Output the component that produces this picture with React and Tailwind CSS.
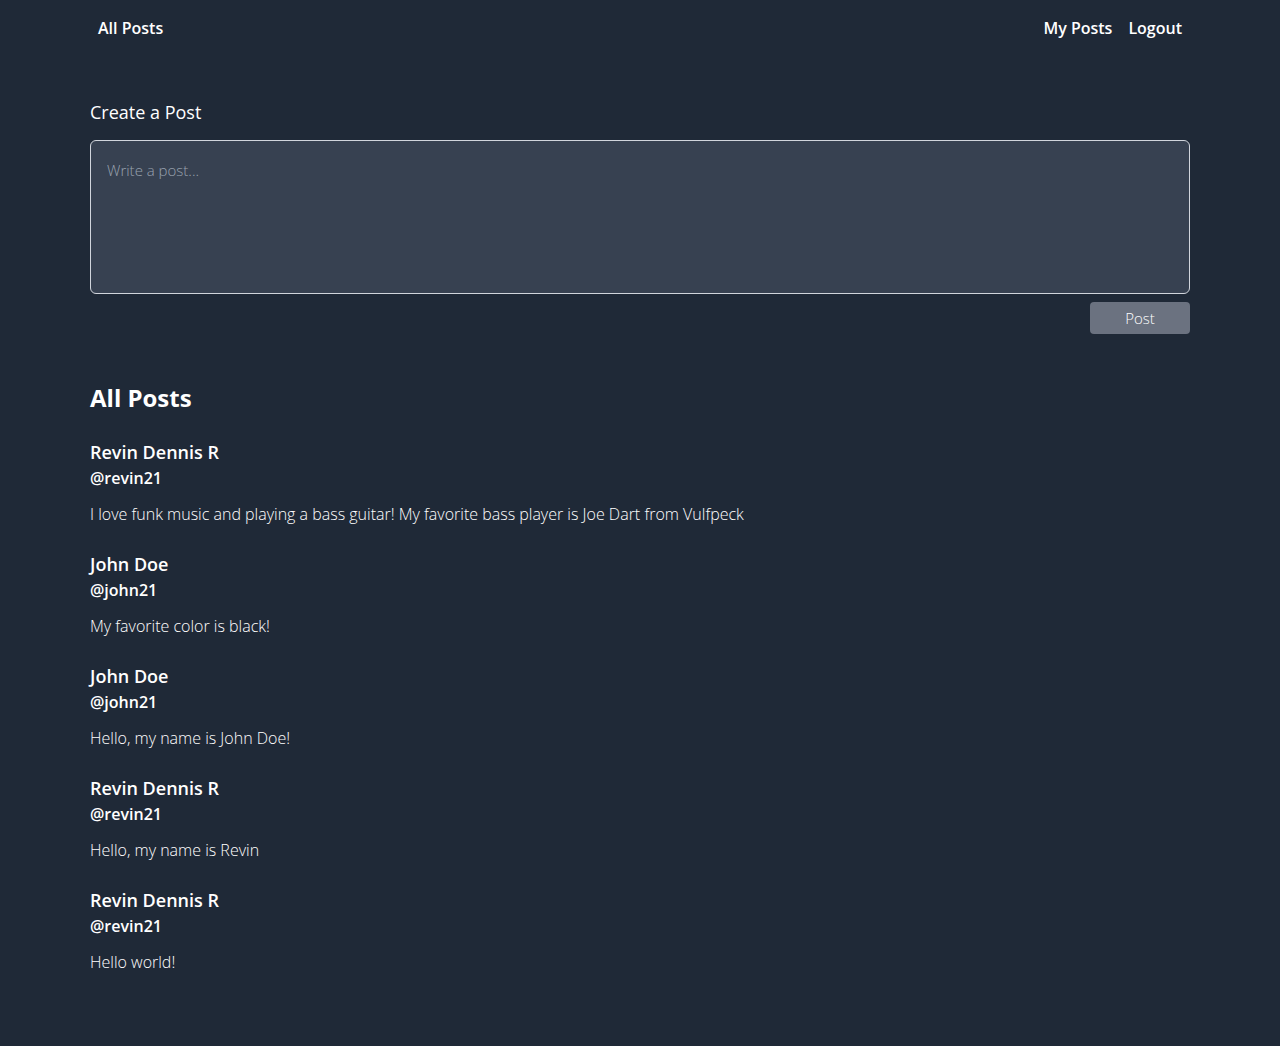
const POSTS = [
  { name: "Revin Dennis R", handle: "@revin21", body: "I love funk music and playing a bass guitar! My favorite bass player is Joe Dart from Vulfpeck" },
  { name: "John Doe", handle: "@john21", body: "My favorite color is black!" },
  { name: "John Doe", handle: "@john21", body: "Hello, my name is John Doe!" },
  { name: "Revin Dennis R", handle: "@revin21", body: "Hello, my name is Revin" },
  { name: "Revin Dennis R", handle: "@revin21", body: "Hello world!" },
];

export default function App() {
  return (
    <div className="min-h-screen bg-[#1f2937] text-white" style={{ fontFamily: '"Open Sans", "Noto Sans", sans-serif' }}>
      <nav className="mx-auto flex h-14 max-w-[1100px] items-center justify-between">
        <a className="px-2 text-base font-semibold">All Posts</a>
        <div className="flex">
          <a className="px-2 text-base font-semibold">My Posts</a>
          <a className="px-2 text-base font-semibold">Logout</a>
        </div>
      </nav>

      <main className="mx-auto max-w-[1100px] pt-[40px]">
        <h2 className="text-lg font-normal leading-8">Create a Post</h2>
        <div className="mt-3">
          <textarea
            className="block h-[154px] w-full resize-none rounded-md border border-gray-300 bg-[#374151] px-4 pt-[18px] pb-4 text-[15px] font-light text-white placeholder:text-gray-400 focus:outline-none"
            placeholder="Write a post..."
          />
          <div className="mt-2 flex justify-end">
            <button className="h-8 w-[100px] rounded bg-[#6b7280] text-[15px] font-light">Post</button>
          </div>
        </div>

        <h1 className="mt-[48px] text-2xl font-bold leading-8">All Posts</h1>
        <div className="mt-[24px] pb-16">
          {POSTS.map((p, i) => (
            <div key={i} className="mb-[24px]">
              <div className="text-lg font-semibold leading-7">{p.name}</div>
              <div className="text-base font-semibold leading-6">{p.handle}</div>
              <p className="mt-3 text-base font-light leading-6">{p.body}</p>
            </div>
          ))}
        </div>
      </main>
    </div>
  );
}
